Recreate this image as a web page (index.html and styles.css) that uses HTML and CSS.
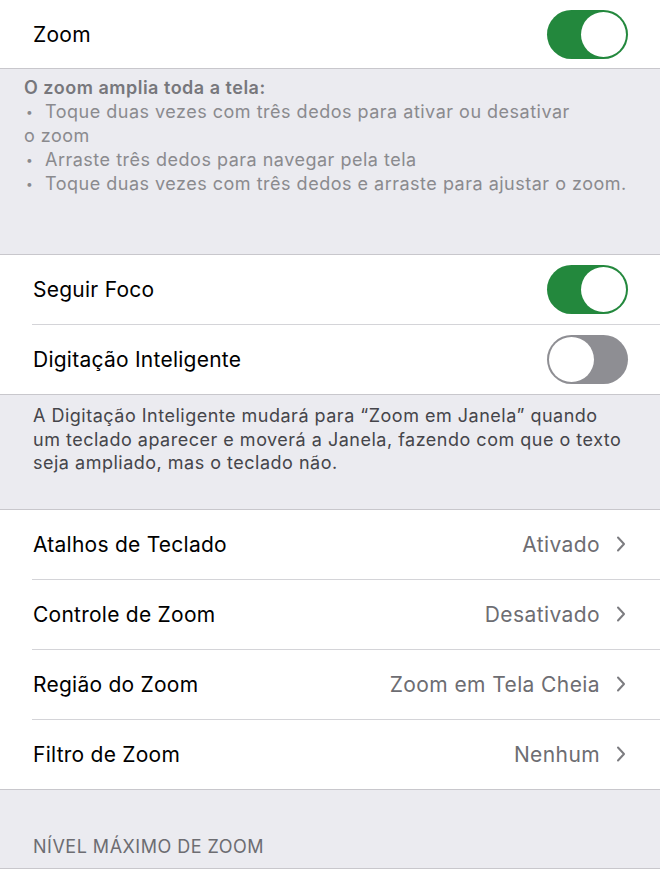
FILE: index.html
```html
<!DOCTYPE html>
<html lang="pt">
  <head>
    <meta charset="UTF-8" />
    <meta name="viewport" content="width=device-width, initial-scale=1.0" />
    <title>Zoom</title>
    <link rel="stylesheet" href="styles.css">
  </head>
  <body>
    <div class="group top">
      <div class="row">
        <span class="label">Zoom</span>
        <span class="switch on"><span class="knob"></span></span>
      </div>
    </div>
    <div class="footer footer-help">
      <div class="strong">O zoom amplia toda a tela:</div>
      <div><span class="dot">•</span>Toque duas vezes com três dedos para ativar ou desativar</div>
      <div>o zoom</div>
      <div><span class="dot">•</span>Arraste três dedos para navegar pela tela</div>
      <div><span class="dot">•</span>Toque duas vezes com três dedos e arraste para ajustar o zoom.</div>
    </div>

    <div class="group">
      <div class="row">
        <span class="label">Seguir Foco</span>
        <span class="switch on"><span class="knob"></span></span>
      </div>
      <div class="row">
        <span class="label">Digitação Inteligente</span>
        <span class="switch"><span class="knob"></span></span>
      </div>
    </div>
    <div class="footer footer-note">
      A Digitação Inteligente mudará para “Zoom em Janela” quando<br />
      um teclado aparecer e moverá a Janela, fazendo com que o texto<br />
      seja ampliado, mas o teclado não.
    </div>

    <div class="group">
      <div class="row">
        <span class="label">Atalhos de Teclado</span>
        <span class="value">Ativado</span>
        <svg class="chevron" viewBox="0 0 10 16"><path d="M2 1.5 L8 8 L2 14.5" /></svg>
      </div>
      <div class="row">
        <span class="label">Controle de Zoom</span>
        <span class="value">Desativado</span>
        <svg class="chevron" viewBox="0 0 10 16"><path d="M2 1.5 L8 8 L2 14.5" /></svg>
      </div>
      <div class="row">
        <span class="label">Região do Zoom</span>
        <span class="value">Zoom em Tela Cheia</span>
        <svg class="chevron" viewBox="0 0 10 16"><path d="M2 1.5 L8 8 L2 14.5" /></svg>
      </div>
      <div class="row">
        <span class="label">Filtro de Zoom</span>
        <span class="value">Nenhum</span>
        <svg class="chevron" viewBox="0 0 10 16"><path d="M2 1.5 L8 8 L2 14.5" /></svg>
      </div>
    </div>

    <div class="header">Nível máximo de zoom</div>
    <div class="group">
      <div class="row"></div>
    </div>
  </body>
</html>
```

FILE: styles.css
```css
body {
  margin: 0;
  background-color: #ebebf0;
  font-family: Inter, Roboto, sans-serif;
  color: #000;
}

.group {
  background-color: #fff;
  border-top: 1px solid #c8c7cc;
  border-bottom: 1px solid #c8c7cc;
  padding-left: 32px;
}

.group.top {
  border-top: none;
}

.row {
  display: flex;
  align-items: center;
  height: 69px;
  padding-right: 32px;
  border-bottom: 1px solid #d4d4d8;
}

.group.top .row {
  height: 68px;
}

.row:last-child {
  border-bottom: none;
}

.label {
  flex: 1;
  font-size: 21px;
  letter-spacing: 0.25px;
  padding-left: 1px;
}

.value {
  font-size: 21px;
  letter-spacing: 0.4px;
  color: #6d6d72;
  margin-right: 16px;
}

.chevron {
  width: 10px;
  height: 16px;
  margin-right: 2px;
}

.chevron path {
  fill: none;
  stroke: #7c7c80;
  stroke-width: 2;
  stroke-linecap: round;
  stroke-linejoin: round;
}

.switch {
  display: flex;
  align-items: center;
  box-sizing: border-box;
  width: 81px;
  height: 49px;
  padding: 2px;
  border-radius: 25px;
  background-color: #8e8e93;
}

.switch.on {
  justify-content: flex-end;
  background-color: #23883d;
}

.knob {
  width: 45px;
  height: 45px;
  border-radius: 50%;
  background-color: #fff;
}

.footer {
  font-size: 18px;
  letter-spacing: 0.5px;
}

.footer-help {
  color: #8a8a8e;
  line-height: 24px;
  padding: 7px 20px 58px 24px;
}

.footer-help .strong {
  font-weight: 600;
  color: #77777c;
}

.dot {
  display: inline-block;
  width: 21px;
  padding-left: 2px;
  box-sizing: border-box;
  font-size: 12px;
  vertical-align: 2px;
}

.footer-note {
  color: #45454a;
  line-height: 23.5px;
  padding: 9px 20px 34px 33px;
}

.header {
  font-size: 18px;
  letter-spacing: 0.5px;
  color: #6d6d72;
  text-transform: uppercase;
  padding: 46px 20px 10px 33px;
  line-height: 22px;
}
```
